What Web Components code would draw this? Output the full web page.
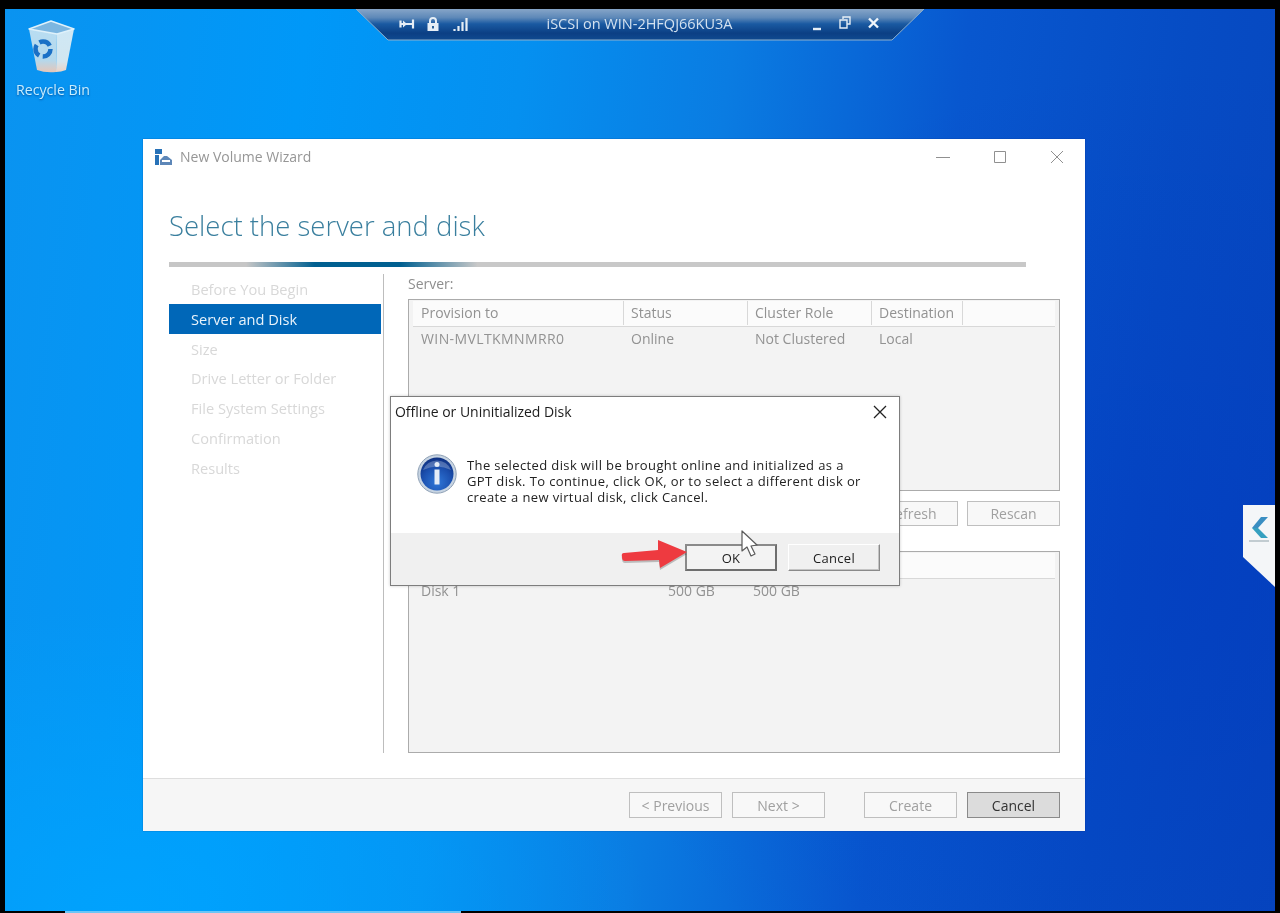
<!DOCTYPE html>
<html><head><meta charset="utf-8">
<style>
html,body{margin:0;padding:0;background:#000;}
body{width:1280px;height:913px;overflow:hidden;font-family:"Open Sans","Noto Sans",sans-serif;}
</style></head>
<body>
<template id="t-desktop"><style>
:host{display:block;position:relative;width:1280px;height:913px;background:#000;overflow:hidden;filter:blur(.35px)}
.wall{position:absolute;left:5px;top:9px;width:1270px;height:902px;
background:
 radial-gradient(520px 300px at 120px 900px,rgba(0,165,255,.8),rgba(0,165,255,0)),
 radial-gradient(620px 500px at 1180px 560px,rgba(0,50,190,.4),rgba(0,50,190,0)),
 linear-gradient(97deg,#0a93f0 0%,#0098f8 22%,#0590f0 38%,#0a7ce2 53%,#0857cf 70%,#064cc4 86%,#0646be 100%);}
.strip{position:absolute;left:65px;bottom:0;width:396px;height:2px;background:#6cc6f6}
</style><div class="wall"></div><div class="strip"></div><slot></slot></template>

<template id="t-bin"><style>
:host{position:absolute;left:9px;top:20px;width:88px;height:84px;display:flex;flex-direction:column;align-items:center;font:14.200px/18px "Open Sans",sans-serif;color:#c8eeff;text-shadow:0 1px 2px rgba(0,40,110,.6)}
svg{display:block;margin-bottom:8px;margin-left:-2px}
</style>
<svg width="50" height="53" viewBox="0 0 50 53">
<defs><linearGradient id="b" x1="0" y1="0" x2="0" y2="1"><stop offset="0" stop-color="#b8ddf2"/><stop offset=".72" stop-color="#b4d8ec"/><stop offset="1" stop-color="#e6c6b8"/></linearGradient>
<linearGradient id="b2" x1="0" y1="0" x2="0" y2="1"><stop offset="0" stop-color="#cfe8f5"/><stop offset=".75" stop-color="#d2e6f0"/><stop offset="1" stop-color="#ecd2c4"/></linearGradient></defs>
<path d="M2 9 L30 13 L29 52 Q18 53 10 50 Z" fill="url(#b)"/>
<path d="M30 13 L47 9 L39 50 Q34 52 29 52 Z" fill="url(#b2)"/>
<path d="M2 9 L24 1 L47 9 L30 14 Z" fill="#7cb6e0" stroke="#dff1fa" stroke-width="1.500" stroke-linejoin="round"/>
<g fill="none" stroke="#1a70c6" stroke-width="4.500"><circle cx="16" cy="29" r="7.500" stroke-dasharray="12 3.700"/></g>
</svg><span>Recycle Bin</span></template>

<template id="t-conn"><style>
:host{position:absolute;left:356px;top:9px;width:568px;height:32px;display:block;color:#d3e1ef;font:14.500px/30px "Open Sans",sans-serif}
svg.bg{position:absolute;inset:0}
.row{position:relative;display:flex;align-items:center;height:30px;padding-left:43px}
.icons{display:flex;gap:11px;align-items:center;width:128px;flex:none}
.title{width:256px;text-align:center;margin-left:-15.500px;flex:none}
.ctl{display:flex;gap:17px;align-items:center;margin-left:44px}
</style>
<svg class="bg" width="568" height="32" viewBox="0 0 568 32">
<defs><linearGradient id="c" x1="0" y1="0" x2="0" y2="1"><stop offset="0" stop-color="#86a5c8"/><stop offset=".28" stop-color="#5d88b8"/><stop offset=".48" stop-color="#1a5aa2"/><stop offset=".78" stop-color="#0b3f84"/><stop offset="1" stop-color="#0f4a90"/></linearGradient></defs>
<path d="M0 0H568L536 31H32Z" fill="url(#c)"/><path d="M0 0L32 31H536L568 0" fill="none" stroke="#8fb0cc" stroke-width="1"/>
</svg>
<div class="row"><div class="icons">
<svg width="16" height="14" viewBox="0 0 16 14"><path d="M1 7h13M1.500 3.500v7M14 2.500v9" stroke="#e6eef6" stroke-width="2.200" fill="none"/><path d="M4 3.500l4 3.500-4 3.500z" fill="#e6eef6"/></svg>
<svg width="14" height="15" viewBox="0 0 14 15"><path d="M1.500 6h11v8h-11z" fill="#e6eef6"/><path d="M4 6V4a3 3 0 0 1 6 0v2" stroke="#e6eef6" stroke-width="2" fill="none"/><path d="M7 9v2.500" stroke="#2a6098" stroke-width="2"/></svg>
<svg width="16" height="15" viewBox="0 0 16 15" style="margin-left:2px"><path d="M1.500 14v-2M5.500 14V9M9.500 14V5M13.500 14V1" stroke="#e6eef6" stroke-width="2.200"/></svg>
</div><div class="title">iSCSI on WIN-2HFQJ66KU3A</div>
<div class="ctl">
<svg width="10" height="14" viewBox="0 0 10 14"><path d="M1 12h8" stroke="#e6eef6" stroke-width="2.400"/></svg>
<svg width="12" height="14" viewBox="0 0 12 14" style="margin-top:-3px"><path d="M4 3V1h7v7H8M1 4h7v8H1z" stroke="#e6eef6" stroke-width="1.400" fill="none"/></svg>
<svg width="11" height="12" viewBox="0 0 11 12" style="margin-top:-2px"><path d="M1 1.500l9 9M10 1.500l-9 9" stroke="#f0f5fa" stroke-width="2.400"/></svg>
</div></div></template>

<template id="t-wizard"><style>
:host{position:absolute;left:143px;top:139px;width:942px;height:692px;display:flex;flex-direction:column;background:#fff;box-shadow:0 0 1px rgba(0,40,110,.7);color:#a8a8a8}
.tb{height:35px;display:flex;align-items:center;padding:0 21px 0 12px;font-size:14px;flex:none}
.tb svg.ic{margin-right:7px}
.tb span{flex:1;color:#969696}
.ctls{display:flex;gap:43px;align-items:center}
h1{margin:0;height:88px;padding:37px 0 0 26px;box-sizing:border-box;font:300 27.500px/30px "Open Sans",sans-serif;color:#3a7f9e;flex:none}
.rule{height:5px;margin-left:26px;width:857px;flex:none;background:linear-gradient(90deg,#c6c6c6 0,#c6c6c6 9%,#005f90 17%,#005f90 27%,#c8c8c8 36%,#c8c8c8 100%)}
.body{display:flex;height:479px;margin-top:7px;flex:none}
nav{width:214px;margin-left:26px;border-right:1px solid #bdbdbd;margin-right:24px;display:flex;flex-direction:column;flex:none}
.content{width:652px;flex:none}
.foot{margin-top:auto;height:53px;box-sizing:border-box;border-top:1px solid #dedede;background:#f6f6f6;display:flex;justify-content:flex-end;align-items:center;padding:0 25px 0 0;gap:10px}
</style>
<div class="tb"><svg class="ic" width="18" height="18" viewBox="0 0 18 18"><path d="M0 1h7v5H0z" fill="#2872b8"/><path d="M0 7h4v10H0z" fill="#2872b8"/><path d="M5 12l4-4h3l5 4v5H5z" fill="#5d87b8"/><path d="M7 12h8v2H7z" fill="#fff"/></svg><span>New Volume Wizard</span>
<div class="ctls">
<svg width="14" height="14" viewBox="0 0 14 14"><path d="M0 7.500h14" stroke="#909090"/></svg>
<svg width="14" height="14" viewBox="0 0 14 14"><path d="M1.500 1.500h11v11h-11z" stroke="#909090" fill="none"/></svg>
<svg width="14" height="14" viewBox="0 0 14 14"><path d="M1 1l12 12M13 1L1 13" stroke="#909090"/></svg>
</div></div>
<h1>Select the server and disk</h1>
<div class="rule"></div>
<div class="body"><nav><slot name="nav"></slot></nav><div class="content"><slot></slot></div></div>
<div class="foot"><slot name="foot"></slot></div></template>

<template id="t-nav"><style>
:host{display:block;height:29.830px;width:212px;padding-left:22px;box-sizing:border-box;font:14.600px/30px "Open Sans",sans-serif;color:#d8d8d8}
:host([on]){background:#0067b8;color:#e8f3fb}
</style><slot></slot></template>

<template id="t-table"><style>
:host{display:block;box-sizing:border-box;width:652px;border:1px solid #ababab;background:#f3f3f3;padding:0 4px;color:#929292;font:14px/24px "Open Sans",sans-serif}
.h,.r{display:grid;grid-template-columns:var(--cols)}
.h{height:25px;border-bottom:1px solid #d8d8d8;margin-top:1px;background:#fbfbfb}
.h div{padding-left:7px;border-right:1px solid #d8d8d8;height:24px;line-height:24px;white-space:nowrap}
.h div:last-child{border-right:0}
.r div{padding-left:7px;white-space:nowrap;height:24px;line-height:24px}
.h div:first-child,.r div:first-child{padding-left:8px}
</style><div class="h"></div><slot></slot></template>

<template id="t-btn"><style>
:host{display:block;box-sizing:border-box;width:93px;height:26px;border:1px solid #bfbfbf;background:#f8f8f8;text-align:center;font:14px/25px "Open Sans",sans-serif;color:#a0a0a0;flex:none}
:host([primary]){background:#dcdcdc;border-color:#8a8a8a;color:#333}
</style><slot></slot></template>

<template id="t-dialog"><style>
:host{position:absolute;left:390px;top:396px;width:510px;height:190px;box-sizing:border-box;border:1px solid #7d7d7d;background:#fff;display:flex;flex-direction:column;color:#1c1c1c;box-shadow:0 0 3px rgba(0,0,0,.2)}
.tb{height:29px;display:flex;align-items:center;justify-content:space-between;padding:0 12px 0 4px;font:14px/29px "Open Sans",sans-serif;letter-spacing:-.03px;flex:none}
.msg{height:107px;display:flex;padding:28px 0 0 26px;box-sizing:border-box;flex:none}
.msg svg{flex:none}
.msg p{margin:3px 0 0 10px;font:13px/16px "Open Sans",sans-serif;letter-spacing:.38px;white-space:pre-line;color:#222}
.foot{flex:1;background:#f0f0f0;display:flex;justify-content:flex-end;align-items:flex-start;gap:11px;padding:11px 19px 0 0}
</style>
<div class="tb"><span>Offline or Uninitialized Disk</span><svg width="14" height="14" viewBox="0 0 14 14"><path d="M1 1l12 12M13 1L1 13" stroke="#222" stroke-width="1.300"/></svg></div>
<div class="msg"><svg width="40" height="40" viewBox="0 0 40 40">
<defs><radialGradient id="i" cx=".5" cy=".75" r=".75"><stop offset="0" stop-color="#2f77d8"/><stop offset=".6" stop-color="#1b4fae"/><stop offset="1" stop-color="#0d2f80"/></radialGradient></defs>
<circle cx="20" cy="20" r="19.200" fill="#c7d4e2" stroke="#8fa1b6"/><circle cx="20" cy="20" r="16.500" fill="url(#i)"/>
<path d="M6 16 A15 15 0 0 1 34 16 Q20 9 6 16Z" fill="#fff" fill-opacity=".25"/>
<circle cx="20" cy="10.500" r="2.500" fill="#e4ecf7"/><path d="M17.500 15.500h5v15h-5z" fill="#e4ecf7"/></svg>
<p>The selected disk will be brought online and initialized as a
GPT disk. To continue, click OK, or to select a different disk or
create a new virtual disk, click Cancel.</p></div>
<div class="foot"><slot></slot></div></template>

<template id="t-dbtn"><style>
:host{display:block;box-sizing:border-box;width:92px;height:27px;background:#f0f0f0;border:1px solid;border-color:#fff #8a8a8a #8a8a8a #fff;box-shadow:inset -1px -1px 0 #c4c4c4;text-align:center;font:13px/26px "Open Sans",sans-serif;letter-spacing:.3px;color:#1c1c1c}
:host([def]){border:2px solid;border-color:#8a8a8a #6e6e6e #6e6e6e #8a8a8a;box-shadow:none;line-height:24px;background:#f3f3f3}
</style><slot></slot></template>

<template id="t-sidetab"><style>
:host{position:absolute;left:1243px;top:505px;width:32px;height:82px;display:block}
svg{display:block}
</style><svg width="32" height="82" viewBox="0 0 32 82">
<path d="M0 0H32V82L0 52Z" fill="#f4f6f8"/>
<path d="M18 12H25L15 23H9Z" fill="#3a8ec2"/><path d="M9 23H15L25 33H18Z" fill="#35a0c0"/>
<path d="M6 36h20" stroke="#9fb0b8" stroke-width="1.200"/></svg></template>

<template id="t-overlay"><style>
:host{position:absolute;left:615px;top:525px;width:150px;height:50px;display:block;pointer-events:none}
svg{display:block}
</style><svg width="150" height="50" viewBox="0 0 150 50">
<path d="M7 32 Q6 28 9 28 L43 25 L43 15 L72 27 L45 43 L44 35 L10 36 Q7 36 7 32Z" fill="#000" fill-opacity=".22" transform="translate(0 2)"/>
<path d="M7 32 Q6 28 9 28 L43 25 L43 15 L72 27 L45 43 L44 35 L10 36 Q7 36 7 32Z" fill="#ee3a40"/>
<path d="M127 6 L127 26 L132 22 L136 31 L140 29 L136 21 L142 20 Z" fill="#fff" stroke="#5a5a5a" stroke-width="1.200" stroke-linejoin="round"/>
</svg></template>

<x-desktop>
 <x-bin></x-bin>
 <x-conn></x-conn>
 <x-sidetab></x-sidetab>
 <x-wizard>
  <x-nav slot="nav">Before You Begin</x-nav>
  <x-nav slot="nav" on>Server and Disk</x-nav>
  <x-nav slot="nav">Size</x-nav>
  <x-nav slot="nav">Drive Letter or Folder</x-nav>
  <x-nav slot="nav">File System Settings</x-nav>
  <x-nav slot="nav">Confirmation</x-nav>
  <x-nav slot="nav">Results</x-nav>
  <x-panel></x-panel>
  <x-btn slot="foot">&lt; Previous</x-btn>
  <x-btn slot="foot">Next &gt;</x-btn>
  <span slot="foot" style="width:19px"></span>
  <x-btn slot="foot">Create</x-btn>
  <x-btn slot="foot" primary>Cancel</x-btn>
 </x-wizard>
 <x-dialog>
  <x-dbtn def>OK</x-dbtn>
  <x-dbtn>Cancel</x-dbtn>
 </x-dialog>
 <x-overlay></x-overlay>
</x-desktop>

<script>
function simple(tag,tid){customElements.define(tag,class extends HTMLElement{constructor(){super();this.attachShadow({mode:'open'}).appendChild(document.getElementById(tid).content.cloneNode(true));}});}
[['x-desktop','t-desktop'],['x-bin','t-bin'],['x-conn','t-conn'],['x-wizard','t-wizard'],['x-nav','t-nav'],['x-btn','t-btn'],['x-dialog','t-dialog'],['x-dbtn','t-dbtn'],['x-sidetab','t-sidetab'],['x-overlay','t-overlay']].forEach(a=>simple(a[0],a[1]));
customElements.define('x-table',class extends HTMLElement{
 constructor(){super();const s=this.attachShadow({mode:'open'});s.appendChild(document.getElementById('t-table').content.cloneNode(true));}
 set data(d){const s=this.shadowRoot;this.style.setProperty('--cols',d.cols);this.style.height=d.h+'px';
  const h=s.querySelector('.h');d.head.forEach(t=>{const e=document.createElement('div');e.textContent=t;h.appendChild(e);});
  d.rows.forEach(r=>{const w=document.createElement('div');w.className='r';r.forEach(t=>{const e=document.createElement('div');e.textContent=t;if(/^WIN-/.test(t))e.style.letterSpacing='.4px';w.appendChild(e);});s.appendChild(w);});}
});
customElements.define('x-panel',class extends HTMLElement{
 constructor(){super();const s=this.attachShadow({mode:'open'});
 s.innerHTML=`<style>:host{display:block;font:14px/20px "Open Sans",sans-serif;color:#8e8e8e}
 .l{height:25px;line-height:20px}.btns{display:flex;justify-content:flex-end;gap:9px;margin:10px 0 25px}.btns x-btn{height:25px;line-height:24px}</style>
 <div class="l">Server:</div><x-table id="a"></x-table><div class="btns"><x-btn>Refresh</x-btn><x-btn>Rescan</x-btn></div><x-table id="b"></x-table>`;
 s.getElementById('a').data={h:192,cols:'211px 124px 124px 91px 1fr',head:['Provision to','Status','Cluster Role','Destination',''],rows:[['WIN-MVLTKMNMRR0','Online','Not Clustered','Local','']]};
 s.getElementById('b').data={h:202,cols:'248px 85px 85px 1fr',head:['','','',''],rows:[['Disk 1','500 GB','500 GB','']]};
 }});
</script>
</body></html>
